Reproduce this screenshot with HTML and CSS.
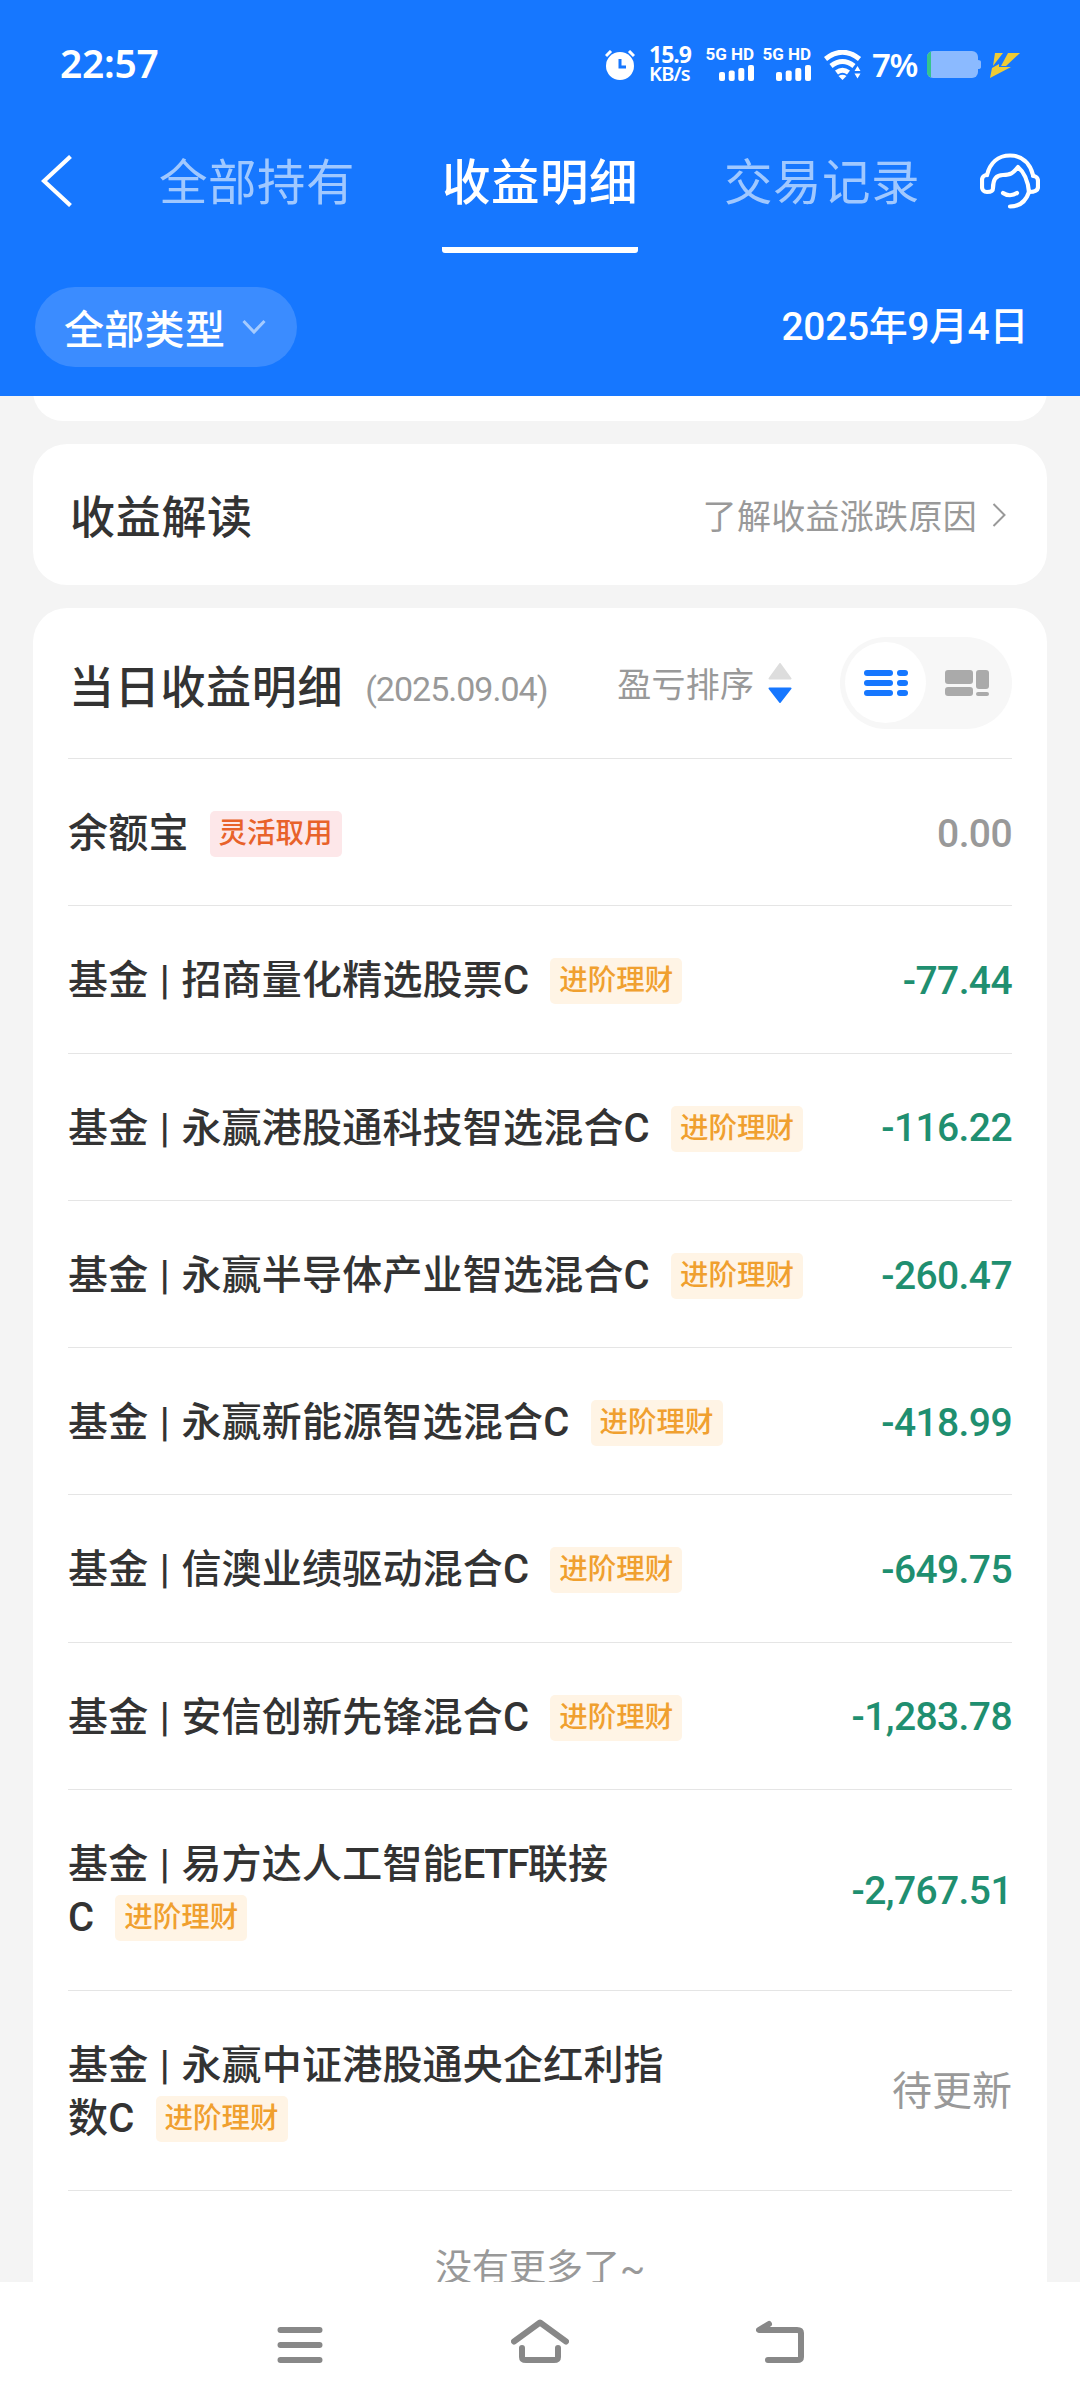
FILE: index.html
```html
<!DOCTYPE html>
<html lang="zh-CN">
<head>
    <meta charset="UTF-8">
    <meta name="viewport" content="width=device-width, initial-scale=1.0">
    <title>收益明细</title>
    <link rel="stylesheet" href="styles.css">
</head>
<body>
    <div class="screen">
        <header class="header">
            <div class="status-bar">
                <span class="clock">22:57</span>
                <div class="status-icons">
                    <svg class="alarm" width="30" height="30" viewBox="0 0 30 30">
                        <circle cx="15" cy="16" r="14" fill="#fff"/>
                        <path d="M1 6l5-5M29 6l-5-5" stroke="#fff" stroke-width="3"/>
                        <path d="M15 9v8h6" stroke="#1677ff" stroke-width="3" fill="none"/>
                    </svg>
                    <div class="speed"><b>15.9</b><span>KB/s</span></div>
                    <div class="signal">
                        <span>5G HD</span>
                        <svg width="35" height="16" viewBox="0 0 35 16" fill="#fff">
                            <rect x="0" y="7" width="6" height="9" rx="2"/>
                            <rect x="9.7" y="5.500" width="6" height="10.500" rx="2"/>
                            <rect x="19.300" y="3" width="6" height="13" rx="2"/>
                            <rect x="29" y="0" width="6" height="16" rx="2"/>
                        </svg>
                    </div>
                    <div class="signal">
                        <span>5G HD</span>
                        <svg width="35" height="16" viewBox="0 0 35 16" fill="#fff">
                            <rect x="0" y="7" width="6" height="9" rx="2"/>
                            <rect x="9.7" y="5.500" width="6" height="10.500" rx="2"/>
                            <rect x="19.300" y="3" width="6" height="13" rx="2"/>
                            <rect x="29" y="0" width="6" height="16" rx="2"/>
                        </svg>
                    </div>
                    <svg class="wifi" width="38" height="30" viewBox="0 0 38 30">
                        <g fill="none" stroke="#fff" stroke-width="5">
                            <path d="M1.500 9Q18.500-4.500 35.500 9"/>
                            <path d="M7 16Q18.500 7 30 16"/>
                            <path d="M12.500 22.500Q18.500 18 24.500 22.500"/>
                        </g>
                        <path d="M14.500 26q4-2.500 8 0l-4 4zM30.500 21l3-5 3 5zM30.500 23.500l3 5 3-5z" fill="#fff"/>
                    </svg>
                    <span class="percent">7%</span>
                    <svg class="battery" width="54" height="28" viewBox="0 0 54 28">
                        <rect x="0" y="0" width="51" height="27" rx="6" fill="#8bbaff"/>
                        <path d="M51 9q3 0 3 2v5q0 2-3 2z" fill="#8bbaff"/>
                        <path d="M4 .5Q0 2 0 6v15q0 4 4 5.500z" fill="#35c48d"/>
                    </svg>
                    <svg class="bolt" width="30" height="25" viewBox="0 0 30 25" fill="#eecb35">
                        <path d="M5 0h8L3 13zM18 0h12L16 13h-5z"/>
                        <path d="M2 15l7-4v3h12L0 25z"/>
                    </svg>
                </div>
            </div>

            <nav class="tabs">
                <svg class="back" width="32" height="52" viewBox="0 0 32 52">
                    <path d="M29.500 1.500L3 26l26.500 24.500" fill="none" stroke="#fff" stroke-width="4.200"/>
                </svg>
                <a class="tab">全部持有</a>
                <a class="tab active">收益明细</a>
                <a class="tab">交易记录</a>
                <svg class="service" width="60" height="56" viewBox="0 0 60 56" fill="none" stroke="#fff" stroke-width="4.200" stroke-linecap="round" stroke-linejoin="round">
                    <path d="M7 22C10 10 18 2.500 30 2.500S50 10 53 22"/>
                    <path d="M7 22C4 22 2 24 2 27v7c0 3 2 5 5 5s6 0 6-4c0-9 4-13 10-13 8 0 10-2 15-8 7 6 10 14 11 25 3 0 9 0 9-5v-6c0-3-2-5-5-5"/>
                    <path d="M49 39c-3 9-9 14.500-19 14.500M23 40c4 3 10 3 14 0"/>
                </svg>
            </nav>

            <div class="filters">
                <button class="type-btn">
                    全部类型
                    <svg width="24" height="16" viewBox="0 0 24 16">
                        <path d="M1.500 2L12 13 22.500 2" fill="none" stroke="#a5cbff" stroke-width="3"/>
                    </svg>
                </button>
                <span class="date">2025年9月4日</span>
            </div>
        </header>

        <main class="content">
            <section class="card card-prev"></section>

            <section class="card card-explain">
                <h2>收益解读</h2>
                <a class="more">
                    了解收益涨跌原因
                    <svg width="15" height="24" viewBox="0 0 15 24">
                        <path d="M1.500 1L12.500 12 1.500 23" fill="none" stroke="#999" stroke-width="2"/>
                    </svg>
                </a>
            </section>

            <section class="card card-list">
                <div class="list-head">
                    <h2>当日收益明细</h2>
                    <span class="day">(2025.09.04)</span>
                    <span class="sort">盈亏排序</span>
                    <svg class="sort-icon" width="24" height="40" viewBox="0 0 24 40" stroke-width="2" stroke-linejoin="round">
                        <path d="M12 1L22.500 15.500h-21z" fill="#ddd" stroke="#ddd"/>
                        <path d="M12 39L22.500 25.500h-21z" fill="#1677ff" stroke="#1677ff"/>
                    </svg>
                    <div class="switch">
                        <span class="switch-item on">
                            <svg width="44" height="26" viewBox="0 0 44 26" fill="#1677ff">
                                <rect x="0" y="0" width="29" height="6" rx="3"/>
                                <rect x="0" y="10" width="29" height="6" rx="3"/>
                                <rect x="0" y="20" width="29" height="6" rx="3"/>
                                <rect x="33" y="0" width="11" height="6" rx="3"/>
                                <rect x="33" y="10" width="11" height="6" rx="3"/>
                                <rect x="33" y="20" width="11" height="6" rx="3"/>
                            </svg>
                        </span>
                        <span class="switch-item">
                            <svg width="44" height="26" viewBox="0 0 44 26" fill="#aaa">
                                <rect x="0" y="0" width="28" height="14" rx="3"/>
                                <rect x="0" y="17" width="28" height="9" rx="3"/>
                                <rect x="31" y="0" width="13" height="19" rx="3"/>
                                <rect x="31" y="22" width="13" height="4" rx="2"/>
                            </svg>
                        </span>
                    </div>
                </div>

                <ul class="list">
                    <li>
                        <div class="name">余额宝<span class="tag tag-red">灵活取用</span></div>
                        <span class="amount gray">0.00</span>
                    </li>
                    <li>
                        <div class="name">基金<i>|</i>招商量化精选股票C<span class="tag">进阶理财</span></div>
                        <span class="amount">-77.44</span>
                    </li>
                    <li>
                        <div class="name">基金<i>|</i>永赢港股通科技智选混合C<span class="tag">进阶理财</span></div>
                        <span class="amount">-116.22</span>
                    </li>
                    <li>
                        <div class="name">基金<i>|</i>永赢半导体产业智选混合C<span class="tag">进阶理财</span></div>
                        <span class="amount">-260.47</span>
                    </li>
                    <li>
                        <div class="name">基金<i>|</i>永赢新能源智选混合C<span class="tag">进阶理财</span></div>
                        <span class="amount">-418.99</span>
                    </li>
                    <li>
                        <div class="name">基金<i>|</i>信澳业绩驱动混合C<span class="tag">进阶理财</span></div>
                        <span class="amount">-649.75</span>
                    </li>
                    <li>
                        <div class="name">基金<i>|</i>安信创新先锋混合C<span class="tag">进阶理财</span></div>
                        <span class="amount">-1,283.78</span>
                    </li>
                    <li>
                        <div class="name">基金<i>|</i>易方达人工智能<span class="latin">ETF</span>联接<br>C<span class="tag">进阶理财</span></div>
                        <span class="amount">-2,767.51</span>
                    </li>
                    <li>
                        <div class="name">基金<i>|</i>永赢中证港股通央企红利指<br>数C<span class="tag">进阶理财</span></div>
                        <span class="amount pending">待更新</span>
                    </li>
                </ul>
                <p class="no-more">没有更多了~</p>
            </section>
        </main>

        <footer class="nav-bar">
            <svg width="46" height="44" viewBox="0 0 46 44" stroke="#888" stroke-width="6" stroke-linecap="round">
                <path d="M3.500 11h39M3.500 26h39M3.500 41h39"/>
            </svg>
            <svg width="58" height="44" viewBox="0 0 58 44" fill="none" stroke="#888" stroke-width="6" stroke-linecap="round" stroke-linejoin="round">
                <path d="M3 22.500L29 3.500l26 19"/>
                <path d="M11 29v9q0 3 4 3h28q4 0 4-3v-9"/>
            </svg>
            <svg width="48" height="44" viewBox="0 0 48 44" fill="none" stroke="#888" stroke-width="6" stroke-linecap="round" stroke-linejoin="round">
                <path d="M13 5L3 11h38q4 0 4 3v24q0 3-4 3H12"/>
            </svg>
        </footer>
    </div>
</body>
</html>
```
FILE: styles.css
```css
* {
    box-sizing: border-box;
}
body {
    margin: 0;
    background: #f4f4f4;
    font-family: Roboto, "Noto Sans CJK SC", sans-serif;
    color: #333;
}
h2, p, ul {
    margin: 0;
    padding: 0;
}
svg {
    display: block;
    flex-shrink: 0;
}
.screen {
    width: 1080px;
    height: 2408px;
    display: flex;
    flex-direction: column;
    overflow: hidden;
}

/* header */
.header {
    height: 396px;
    flex-shrink: 0;
    background: #1677ff;
    color: #fff;
}
.status-bar {
    height: 130px;
    padding: 0 60px;
    display: flex;
    justify-content: space-between;
    align-items: center;
}
.clock {
    margin-bottom: 5px;
    font: 600 39px "Noto Sans", sans-serif;
    letter-spacing: -0.3px;
}
.status-icons {
    display: flex;
    align-items: center;
}
.speed {
    width: 44px;
    margin-left: 14px;
    margin-bottom: 2px;
    display: flex;
    flex-direction: column;
    gap: 2px;
    font: 600 20px/18px "Noto Sans", sans-serif;
    white-space: nowrap;
}
.speed b {
    font-size: 23px;
    font-weight: 700;
    line-height: 18px;
    letter-spacing: -1px;
}
.speed span {
    letter-spacing: -0.8px;
}
.signal {
    width: 47px;
    margin-left: 10px;
    margin-bottom: 3px;
    display: flex;
    flex-direction: column;
    align-items: flex-end;
    gap: 3px;
    font: 700 17px/16px Roboto, sans-serif;
    white-space: nowrap;
}
.speed + .signal {
    margin-left: 14px;
}
.wifi {
    margin-left: 13px;
}
.percent {
    width: 45px;
    margin-left: 10px;
    font: 600 33px/40px "Noto Sans", sans-serif;
    letter-spacing: -1.5px;
}
.battery {
    margin-left: 10px;
}
.bolt {
    margin-left: 9px;
}
.tabs {
    height: 127px;
    padding: 0 39px 0 41px;
    display: flex;
    align-items: flex-start;
}
.back {
    margin-top: 25px;
}
.tab {
    width: 196px;
    height: 123px;
    margin-left: 86px;
    text-align: center;
    font-size: 48.5px;
    line-height: 107px;
    letter-spacing: 0.5px;
    white-space: nowrap;
    color: #a0c8ff;
}
.tab.active {
    margin-left: 87px;
    font-weight: 500;
    color: #fff;
    border-bottom: 6px solid #fff;
    border-radius: 3px;
}
.service {
    margin-left: 60px;
    margin-top: 23px;
}
.filters {
    margin-top: 30px;
    padding: 0 52px 0 35px;
    display: flex;
    justify-content: space-between;
    align-items: center;
}
.type-btn {
    width: 262px;
    height: 80px;
    padding: 0 0 0 29px;
    display: flex;
    align-items: center;
    gap: 17px;
    border: 0;
    border-radius: 40px;
    background: #3b8cff;
    color: #fff;
    font: 500 40px Roboto, "Noto Sans CJK SC", sans-serif;
    letter-spacing: 0.3px;
}
.date {
    margin-bottom: 8px;
    font-size: 39px;
    font-weight: 500;
    letter-spacing: -0.4px;
}

/* cards */
.content {
    flex: 1;
    min-height: 0;
    padding: 0 33px;
    overflow: hidden;
}
.card {
    background: #fff;
    border-radius: 34px;
}
.card-prev {
    height: 60px;
    margin-top: -35px;
}
.card-explain {
    height: 141px;
    margin-top: 23px;
    padding: 0 40px 0 37px;
    display: flex;
    justify-content: space-between;
    align-items: center;
}
h2 {
    font-size: 45px;
    font-weight: 500;
    letter-spacing: 0.7px;
    white-space: nowrap;
}
.more {
    display: flex;
    align-items: center;
    gap: 15px;
    font-size: 34px;
    letter-spacing: 0.3px;
    color: #999;
}
.card-list {
    margin-top: 23px;
    height: 1800px;
    padding: 0 35px;
}
.list-head {
    height: 151px;
    padding: 0 0 1px 1px;
    display: flex;
    align-items: center;
    border-bottom: 1px solid #e5e5e5;
}
.list-head h2 {
    margin-top: 3px;
}
.day {
    width: 182px;
    margin: 12px 0 0 22px;
    font-size: 34px;
    letter-spacing: -1px;
    color: #999;
}
.sort {
    margin-left: 70px;
    font-size: 34px;
    letter-spacing: 0.3px;
    white-space: nowrap;
    color: #999;
}
.sort-icon {
    margin-left: 14px;
}
.switch {
    width: 172px;
    height: 92px;
    margin-left: auto;
    padding: 0 5px;
    display: flex;
    align-items: center;
    border-radius: 46px;
    background: #f7f7f7;
}
.switch-item {
    width: 81px;
    height: 81px;
    display: flex;
    justify-content: center;
    align-items: center;
    border-radius: 50%;
}
.switch-item.on {
    background: #fff;
}
.list {
    list-style: none;
}
.list li {
    padding: 48px 0 45px;
    display: flex;
    justify-content: space-between;
    align-items: center;
    border-bottom: 1px solid #e5e5e5;
}
.name {
    font-size: 40px;
    font-weight: 500;
    line-height: 53.3px;
    letter-spacing: 0.2px;
    white-space: nowrap;
}
.name i {
    display: inline-block;
    width: 33px;
    text-align: center;
    font-style: normal;
}
.latin {
    letter-spacing: -1.5px;
}
.tag {
    display: inline-block;
    height: 46px;
    margin: -10px 0 -10px 21px;
    padding: 0 9px;
    border-radius: 5px;
    background: #fff4e5;
    color: #f0a02f;
    font-size: 28.5px;
    line-height: 45px;
    letter-spacing: 0;
    vertical-align: 4px;
}
.tag-red {
    background: #fde7e9;
    color: #e8622a;
}
.amount {
    font-size: 39px;
    font-weight: 500;
    line-height: 50px;
    letter-spacing: -0.6px;
    color: #1f8f70;
}
.amount.gray {
    color: #999;
}
.amount.pending {
    font-size: 40px;
    font-weight: 400;
    letter-spacing: 0;
    color: #999;
}
.no-more {
    margin-top: 50px;
    text-align: center;
    font-size: 37px;
    line-height: 56px;
    color: #999;
}

/* system navigation */
.nav-bar {
    height: 126px;
    flex-shrink: 0;
    padding: 37px 276px 0 277px;
    display: flex;
    justify-content: space-between;
    align-items: flex-start;
    background: #fff;
}
```
